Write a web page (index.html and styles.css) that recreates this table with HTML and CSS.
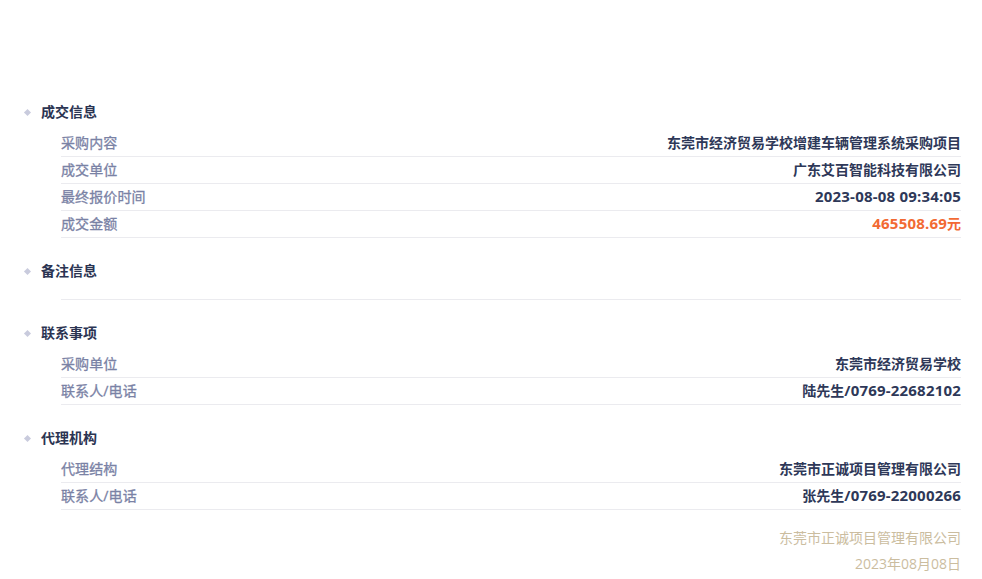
FILE: index.html
```html
<!DOCTYPE html>
<html lang="zh-CN">
<head>
<meta charset="utf-8">
<title>成交公告</title>
<link rel="stylesheet" href="styles.css">
</head>
<body>
<div class="page">
  <section class="section">
    <h2 class="title">成交信息</h2>
    <div class="rows">
      <div class="row"><span class="label">采购内容</span><span class="value">东莞市经济贸易学校增建车辆管理系统采购项目</span></div>
      <div class="row"><span class="label">成交单位</span><span class="value">广东艾百智能科技有限公司</span></div>
      <div class="row"><span class="label">最终报价时间</span><span class="value"><span class="num">2023-08-08 09:34:05</span></span></div>
      <div class="row"><span class="label">成交金额</span><span class="value price"><span class="num">465508.69</span>元</span></div>
    </div>
  </section>
  <section class="section">
    <h2 class="title">备注信息</h2>
    <div class="rows">
      <div class="remark"></div>
    </div>
  </section>
  <section class="section">
    <h2 class="title">联系事项</h2>
    <div class="rows">
      <div class="row"><span class="label">采购单位</span><span class="value">东莞市经济贸易学校</span></div>
      <div class="row"><span class="label">联系人/电话</span><span class="value">陆先生<span class="num">/0769-22682102</span></span></div>
    </div>
  </section>
  <section class="section">
    <h2 class="title">代理机构</h2>
    <div class="rows">
      <div class="row"><span class="label">代理结构</span><span class="value">东莞市正诚项目管理有限公司</span></div>
      <div class="row"><span class="label">联系人/电话</span><span class="value">张先生<span class="num">/0769-22000266</span></span></div>
    </div>
  </section>
  <footer class="sign">
    <p>东莞市正诚项目管理有限公司</p>
    <p>2023年08月08日</p>
  </footer>
</div>
</body>
</html>
```

FILE: styles.css
```css
* { box-sizing: border-box; }
html, body { margin: 0; padding: 0; background: #fff; }
body {
  font-family: "Open Sans", "Noto Sans CJK SC", sans-serif;
  font-size: 14px;
}
.page {
  padding: 102px 21px 0 24px;
}
.section { margin-bottom: 23px; }
.title {
  display: flex;
  align-items: center;
  margin: 0;
  height: 20px;
  line-height: 20px;
  font-size: 14px;
  font-weight: 700;
  color: #2b3452;
}
.title::before {
  content: "";
  width: 5px;
  height: 5px;
  background: #c9cbdd;
  transform: rotate(45deg);
  margin: 0 11px 0 1px;
}
.rows {
  margin: 8px 0 0 37px;
}
.row {
  display: flex;
  justify-content: space-between;
  align-items: center;
  height: 27px;
  padding-bottom: 2px;
  border-bottom: 1px solid #ebebef;
}
.label {
  color: #7a82a5;
  letter-spacing: 0.1px;
  -webkit-text-stroke: 0.3px #7a82a5;
}
.value { color: #2e3858; font-weight: 700; }
.num { font-size: 15px; letter-spacing: 0.2px; }
.price { color: #f26a33; }
.remark {
  height: 11px;
  border-bottom: 1px solid #ebebef;
  margin-bottom: 1px;
}
.sign {
  text-align: right;
  color: #cbbd9f;
  margin-top: -8px;
}
.sign p { margin: 0; line-height: 26px; }
```
